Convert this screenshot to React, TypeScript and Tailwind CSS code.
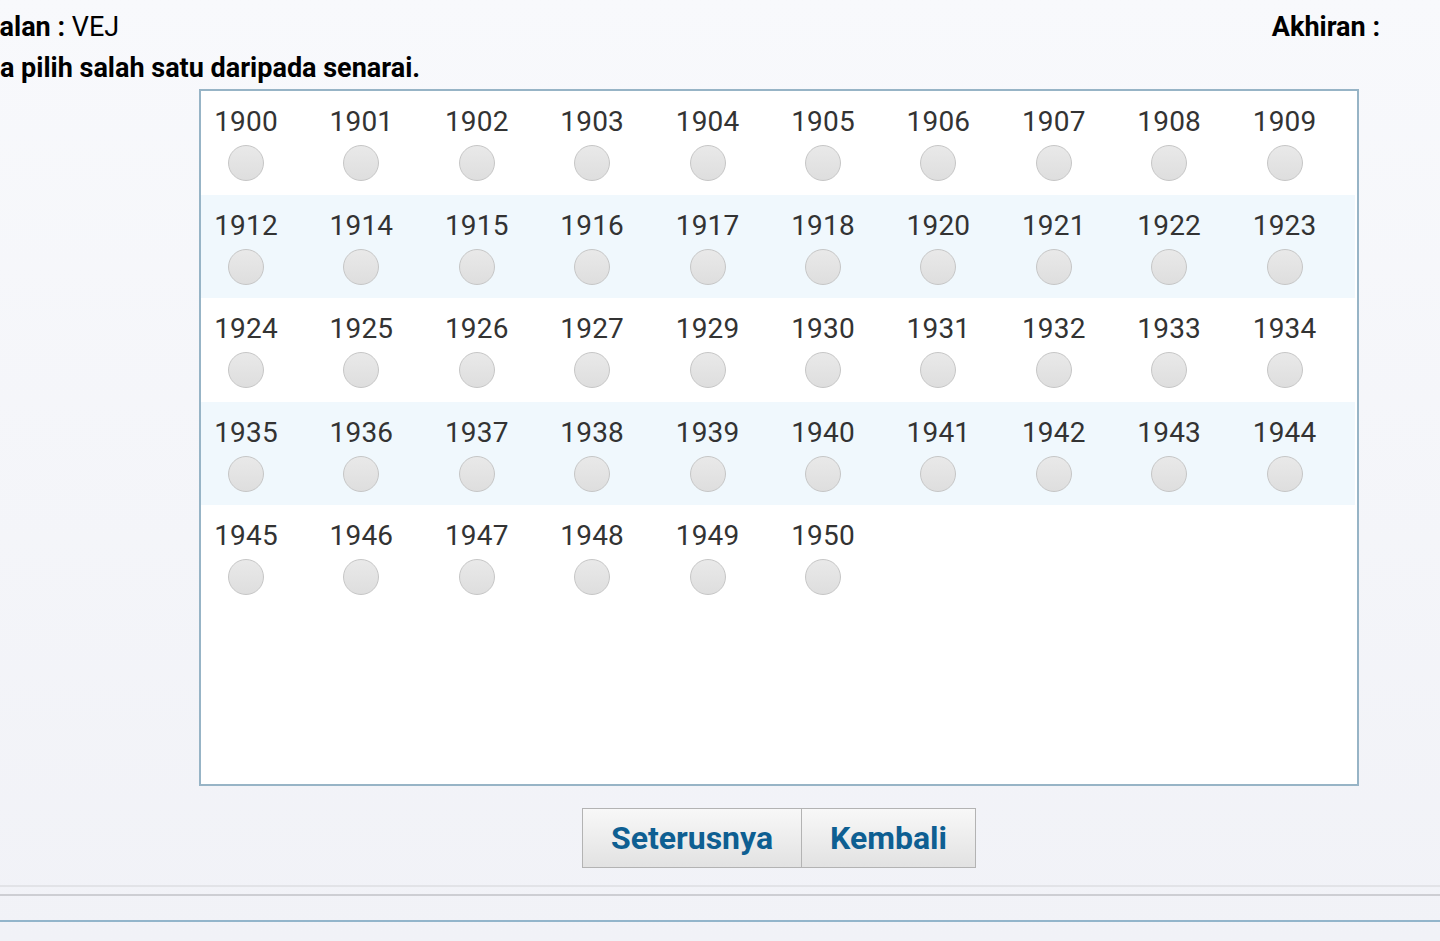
import React from "react";

const rows: string[][] = [
  ["1900", "1901", "1902", "1903", "1904", "1905", "1906", "1907", "1908", "1909"],
  ["1912", "1914", "1915", "1916", "1917", "1918", "1920", "1921", "1922", "1923"],
  ["1924", "1925", "1926", "1927", "1929", "1930", "1931", "1932", "1933", "1934"],
  ["1935", "1936", "1937", "1938", "1939", "1940", "1941", "1942", "1943", "1944"],
  ["1945", "1946", "1947", "1948", "1949", "1950"],
];

function Cell({ year }: { year: string }) {
  return (
    <label className="flex pl-[15px] pt-[15px] cursor-pointer">
      <span className="flex flex-col items-center w-[60px]">
        <span className="text-[28px] leading-[32px] text-[#333333] tracking-[0.2px]">{year}</span>
        <span className="mt-[7px] w-[36px] h-[36px] rounded-full border border-[#c6c6c6] bg-gradient-to-b from-[#e9e9e9] to-[#dedede]" />
      </span>
    </label>
  );
}

export default function App() {
  return (
    <div
      className="w-[1440px] h-[941px] overflow-hidden bg-gradient-to-b from-[#f8f9fc] to-[#f1f2f7] text-black"
      style={{ fontFamily: "Roboto, 'Noto Sans', sans-serif" }}
    >
      <div className="pt-[6px] text-[27px] leading-[42px]">
        <div className="flex items-center">
          <div className="ml-[-38px] whitespace-nowrap">
            <span className="font-bold">Awalan : </span>
            <span>VEJ</span>
          </div>
          <div className="ml-auto mr-[60px] font-bold">Akhiran :</div>
        </div>
        <div className="ml-[-31px] font-bold whitespace-nowrap leading-[41px]">Sila pilih salah satu daripada senarai.</div>
      </div>

      <div className="ml-[199px] w-[1160px] h-[697px] border-2 border-[#97b4c6] bg-white">
        {rows.map((r, i) => (
          <div
            key={i}
            className={`grid grid-cols-10 h-[103.5px] mr-[2px] ${i % 2 === 1 ? "bg-[#f0f8fd]" : "bg-white"}`}
          >
            {r.map((y) => (
              <Cell key={y} year={y} />
            ))}
          </div>
        ))}
      </div>

      <div className="ml-[199px] w-[1160px] flex justify-center mt-[22px]">
        <div className="flex">
          <button className="h-[60px] px-[28px] border border-[#b3b3b3] bg-gradient-to-b from-[#f8f8f8] to-[#e2e2e2] text-[32px] font-bold text-[#0e5f92]">
            Seterusnya
          </button>
          <button className="h-[60px] px-[28px] border border-l-0 border-[#b3b3b3] bg-gradient-to-b from-[#f8f8f8] to-[#e2e2e2] text-[32px] font-bold text-[#0e5f92]">
            Kembali
          </button>
        </div>
      </div>

      <div className="mt-[17px] h-[2px] bg-[#e2e3e7]" />
      <div className="mt-[7px] h-[2px] bg-[#cdced3]" />
      <div className="mt-[24px] h-[2px] bg-[#93b5cb]" />
    </div>
  );
}
